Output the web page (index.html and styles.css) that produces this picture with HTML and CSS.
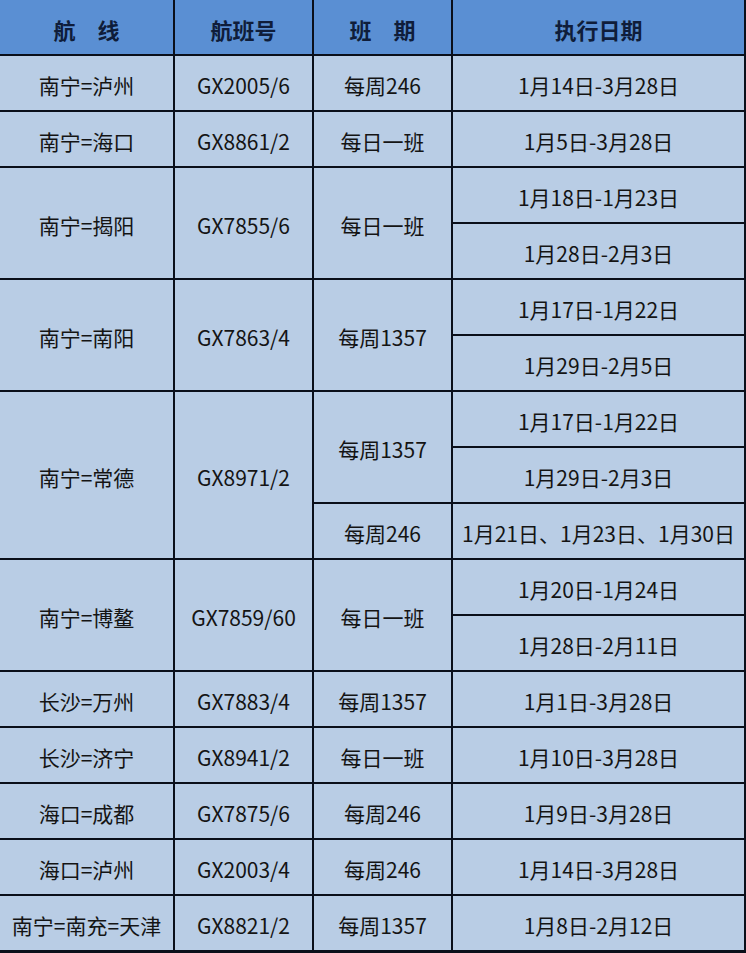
FILE: index.html
```html
<!DOCTYPE html>
<html lang="zh-CN">
<head>
<meta charset="utf-8">
<title>航线表</title>
<link rel="stylesheet" href="styles.css">
</head>
<body>
<div class="table">
  <div class="cell head">航　线</div>
  <div class="cell head">航班号</div>
  <div class="cell head">班　期</div>
  <div class="cell head">执行日期</div>

  <div class="cell">南宁=泸州</div>
  <div class="cell">GX2005/6</div>
  <div class="cell">每周246</div>
  <div class="cell">1月14日-3月28日</div>

  <div class="cell">南宁=海口</div>
  <div class="cell">GX8861/2</div>
  <div class="cell">每日一班</div>
  <div class="cell">1月5日-3月28日</div>

  <div class="cell span2">南宁=揭阳</div>
  <div class="cell span2">GX7855/6</div>
  <div class="cell span2">每日一班</div>
  <div class="cell">1月18日-1月23日</div>
  <div class="cell">1月28日-2月3日</div>

  <div class="cell span2">南宁=南阳</div>
  <div class="cell span2">GX7863/4</div>
  <div class="cell span2">每周1357</div>
  <div class="cell">1月17日-1月22日</div>
  <div class="cell">1月29日-2月5日</div>

  <div class="cell span3">南宁=常德</div>
  <div class="cell span3">GX8971/2</div>
  <div class="cell span2">每周1357</div>
  <div class="cell">1月17日-1月22日</div>
  <div class="cell">1月29日-2月3日</div>
  <div class="cell">每周246</div>
  <div class="cell">1月21日、1月23日、1月30日</div>

  <div class="cell span2">南宁=博鳌</div>
  <div class="cell span2">GX7859/60</div>
  <div class="cell span2">每日一班</div>
  <div class="cell">1月20日-1月24日</div>
  <div class="cell">1月28日-2月11日</div>

  <div class="cell">长沙=万州</div>
  <div class="cell">GX7883/4</div>
  <div class="cell">每周1357</div>
  <div class="cell">1月1日-3月28日</div>

  <div class="cell">长沙=济宁</div>
  <div class="cell">GX8941/2</div>
  <div class="cell">每日一班</div>
  <div class="cell">1月10日-3月28日</div>

  <div class="cell">海口=成都</div>
  <div class="cell">GX7875/6</div>
  <div class="cell">每周246</div>
  <div class="cell">1月9日-3月28日</div>

  <div class="cell">海口=泸州</div>
  <div class="cell">GX2003/4</div>
  <div class="cell">每周246</div>
  <div class="cell">1月14日-3月28日</div>

  <div class="cell">南宁=南充=天津</div>
  <div class="cell">GX8821/2</div>
  <div class="cell">每周1357</div>
  <div class="cell">1月8日-2月12日</div>
</div>
</body>
</html>
```
FILE: styles.css
```css
html, body {
  margin: 0;
  padding: 0;
  background: #b9cde5;
}

.table {
  display: grid;
  grid-template-columns: 173px 137px 137px 291px;
  grid-auto-rows: 54px;
  gap: 2px;
  padding: 0 2px 3px 0;
  width: 746px;
  box-sizing: border-box;
  background: #0a0f1a;
  font-family: "Noto Sans CJK SC", "Noto Sans", sans-serif;
}

.cell {
  display: flex;
  align-items: center;
  justify-content: center;
  padding-top: 4px;
  box-sizing: border-box;
  background: #b9cde5;
  color: #141414;
  font-size: 21px;
  white-space: nowrap;
  overflow: hidden;
}

.head {
  background: #5a8fd3;
  color: #0f1d3a;
  font-size: 22px;
  font-weight: 700;
}

.span2 {
  grid-row: span 2;
}

.span3 {
  grid-row: span 3;
}
```
